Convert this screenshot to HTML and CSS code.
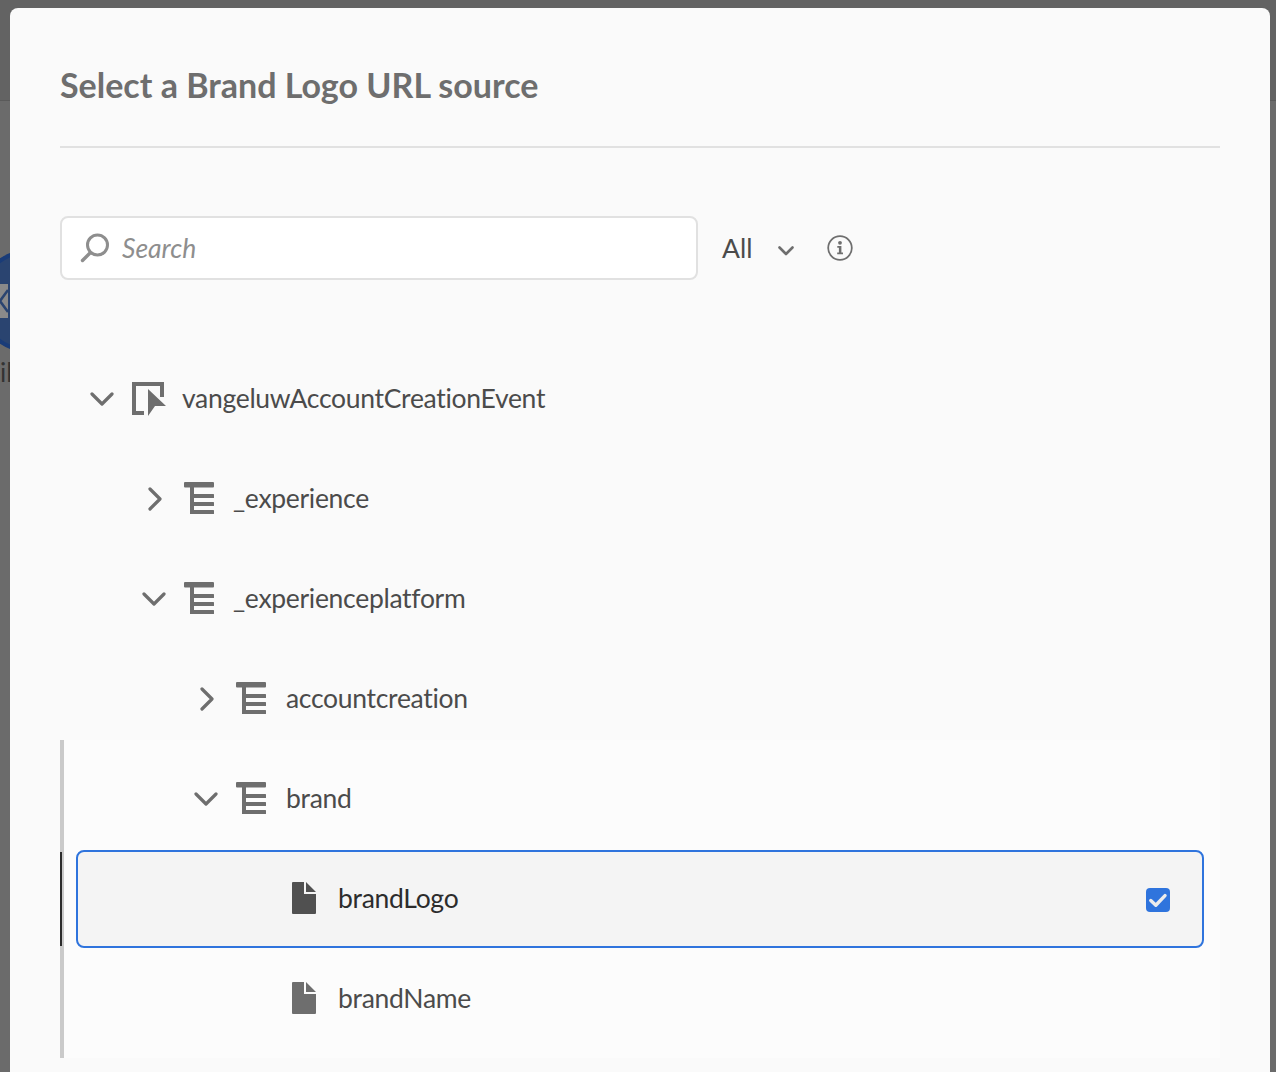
FILE: index.html
```html
<!DOCTYPE html>
<html lang="en">
<head>
    <meta charset="UTF-8">
    <meta name="viewport" content="width=device-width, initial-scale=1.0">
    <title>Select a Brand Logo URL source</title>
    <link rel="stylesheet" href="styles.css">
</head>
<body>
    <!-- page behind the dialog, only a sliver shows -->
    <div class="behind">
        <div class="behind-top"></div>
        <svg class="behind-circle" width="10" height="104" viewBox="0 0 10 104">
            <circle cx="28" cy="52" r="49" fill="#2a4470" stroke="#1a3c78" stroke-width="4"/>
            <rect x="0" y="35" width="8" height="34" fill="#8a8a8a"/>
            <path d="M8 41 L0 52 L8 63" fill="none" stroke="#2a4470" stroke-width="2.5"/>
        </svg>
        <div class="behind-label">il</div>
    </div>

    <div class="dialog">
        <h1 class="dialog-title">Select a Brand Logo URL source</h1>
        <div class="divider"></div>

        <div class="toolbar">
            <div class="search">
                <svg class="search-icon" width="30" height="30" viewBox="0 0 30 30">
                    <circle cx="17.5" cy="12" r="10" fill="none" stroke="#8e8e8e" stroke-width="3"/>
                    <path d="M10 20 L2.5 27.5" fill="none" stroke="#8e8e8e" stroke-width="3.4" stroke-linecap="round"/>
                </svg>
                <span class="search-text">Search</span>
            </div>
            <span class="filter-label">All</span>
            <svg class="filter-chevron" width="16" height="10" viewBox="0 0 16 10">
                <path d="M1.5 1.5 L8 8 L14.5 1.5" fill="none" stroke="#6e6e6e" stroke-width="2.6" stroke-linecap="round" stroke-linejoin="round"/>
            </svg>
            <svg class="info-icon" width="26" height="26" viewBox="0 0 26 26">
                <circle cx="13" cy="13" r="11.8" fill="none" stroke="#6e6e6e" stroke-width="1.8"/>
                <circle cx="13" cy="7.8" r="1.9" fill="#6e6e6e"/>
                <path d="M10.3 11 H14.4 V17.6 H16 V19.3 H10.2 V17.6 H11.9 V12.7 H10.3 Z" fill="#6e6e6e"/>
            </svg>
        </div>

        <div class="tree">
            <div class="row">
                <svg class="chevron down" width="24" height="14" viewBox="0 0 24 14">
                    <path d="M2 2 L12 12 L22 2" fill="none" stroke="#6e6e6e" stroke-width="3.2" stroke-linecap="round" stroke-linejoin="round"/>
                </svg>
                <svg class="icon-event" width="36" height="36" viewBox="0 0 36 36">
                    <path d="M12 32 H2 V3 H30 V16" fill="none" stroke="#6e6e6e" stroke-width="4"/>
                    <path d="M16 8 L34 25 L23 25 L16 35 Z" fill="#6e6e6e" stroke="#fafafa" stroke-width="2" paint-order="stroke"/>
                </svg>
                <span class="row-text">vangeluwAccountCreationEvent</span>
            </div>

            <div class="row level-1">
                <svg class="chevron right" width="14" height="24" viewBox="0 0 14 24">
                    <path d="M2 2 L12 12 L2 22" fill="none" stroke="#6e6e6e" stroke-width="3.2" stroke-linecap="round" stroke-linejoin="round"/>
                </svg>
                <svg class="icon-object" width="30" height="32" viewBox="0 0 30 32"><use href="#object"/></svg>
                <span class="row-text">_experience</span>
            </div>

            <div class="row level-1">
                <svg class="chevron down" width="24" height="14" viewBox="0 0 24 14">
                    <path d="M2 2 L12 12 L22 2" fill="none" stroke="#6e6e6e" stroke-width="3.2" stroke-linecap="round" stroke-linejoin="round"/>
                </svg>
                <svg class="icon-object" width="30" height="32" viewBox="0 0 30 32"><use href="#object"/></svg>
                <span class="row-text">_experienceplatform</span>
            </div>

            <div class="row level-2">
                <svg class="chevron right" width="14" height="24" viewBox="0 0 14 24">
                    <path d="M2 2 L12 12 L2 22" fill="none" stroke="#6e6e6e" stroke-width="3.2" stroke-linecap="round" stroke-linejoin="round"/>
                </svg>
                <svg class="icon-object" width="30" height="32" viewBox="0 0 30 32"><use href="#object"/></svg>
                <span class="row-text">accountcreation</span>
            </div>

            <div class="group">
                <div class="row level-2">
                    <svg class="chevron down" width="24" height="14" viewBox="0 0 24 14">
                        <path d="M2 2 L12 12 L22 2" fill="none" stroke="#6e6e6e" stroke-width="3.2" stroke-linecap="round" stroke-linejoin="round"/>
                    </svg>
                    <svg class="icon-object" width="30" height="32" viewBox="0 0 30 32"><use href="#object"/></svg>
                    <span class="row-text">brand</span>
                </div>

                <div class="row-selected">
                    <svg class="icon-file dark" width="26" height="32" viewBox="0 0 26 32"><use href="#file"/></svg>
                    <span class="row-text">brandLogo</span>
                    <span class="checkbox">
                        <svg width="24" height="24" viewBox="0 0 24 24">
                            <path d="M4.8 12.5 L9.8 17.2 L19 7.6" fill="none" stroke="#ececec" stroke-width="3.4" stroke-linecap="round" stroke-linejoin="round"/>
                        </svg>
                    </span>
                </div>

                <div class="row level-leaf">
                    <svg class="icon-file" width="26" height="32" viewBox="0 0 26 32"><use href="#file"/></svg>
                    <span class="row-text">brandName</span>
                </div>
            </div>
        </div>
    </div>

    <svg class="defs" width="0" height="0">
        <defs>
            <g id="object">
                <rect x="0" y="0" width="30" height="5.5" rx="1"/>
                <rect x="6" y="0" width="4" height="32"/>
                <rect x="6" y="12" width="24" height="4" rx="0.5"/>
                <rect x="6" y="20" width="24" height="4" rx="0.5"/>
                <rect x="6" y="28" width="24" height="4" rx="0.5"/>
            </g>
            <path id="file" d="M1 0 H12 V12 H24 V31 a1 1 0 0 1 -1 1 H1 a1 1 0 0 1 -1 -1 V1 a1 1 0 0 1 1 -1 Z M14 0 L24 10 H14 Z"/>
        </defs>
    </svg>
</body>
</html>
```

FILE: styles.css
```css
html, body {
    margin: 0;
    padding: 0;
}
body {
    font-family: Lato, "Open Sans", Arial, sans-serif;
    font-variant-ligatures: none;
    background-color: #6b6b6b;
    height: 1072px;
    overflow: hidden;
    position: relative;
}
.behind-top {
    position: absolute;
    left: 0;
    top: 0;
    width: 100%;
    height: 100px;
    background: #636363;
    border-bottom: 1px solid #5a5a5a;
}
.behind-circle {
    position: absolute;
    left: 0;
    top: 249px;
}
.behind-label {
    position: absolute;
    left: 0;
    top: 358px;
    font-size: 26px;
    line-height: 28px;
    color: #333;
}
.dialog {
    position: absolute;
    left: 10px;
    top: 8px;
    width: 1260px;
    height: 1064px;
    box-sizing: border-box;
    padding: 0 50px;
    background: #fafafa;
    border-radius: 8px 8px 0 0;
}
.dialog-title {
    margin: 0;
    padding-top: 55px;
    height: 83px;
    font-size: 34px;
    line-height: 44px;
    font-weight: 700;
    color: #6e6e6e;
}
.divider {
    height: 2px;
    background: #e1e1e1;
}
.toolbar {
    display: flex;
    align-items: center;
    margin-top: 68px;
    height: 64px;
}
.search {
    display: flex;
    align-items: center;
    width: 638px;
    height: 64px;
    box-sizing: border-box;
    padding-left: 18px;
    background: #fff;
    border: 2px solid #e1e1e1;
    border-radius: 8px;
}
.search-text {
    margin-left: 12px;
    font-size: 26.5px;
    font-style: italic;
    color: #8e8e8e;
}
.filter-label {
    margin-left: 24px;
    font-size: 26.5px;
    color: #4b4b4b;
}
.filter-chevron {
    margin-left: 26px;
    margin-top: 6px;
}
.info-icon {
    margin-left: 33px;
}
.tree {
    margin-top: 69px;
}
.row, .row-selected {
    display: flex;
    align-items: center;
    height: 100px;
}
.row {
    padding-left: 30px;
}
.row-text {
    font-size: 26.5px;
    letter-spacing: -0.3px;
    margin-bottom: 2px;
    color: #4b4b4b;
}
.chevron.down {
    margin-right: 18px;
}
.chevron.right {
    margin-left: 6px;
    margin-right: 22px;
}
.icon-event {
    margin-right: 14px;
}
.icon-object {
    margin-right: 19px;
    margin-bottom: 2px;
    fill: #6e6e6e;
}
.level-1 {
    padding-left: 82px;
}
.level-2 {
    padding-left: 134px;
}
.level-2 .icon-object {
    margin-right: 20px;
}
.group {
    margin-top: -9px;
    padding-top: 9px;
    height: 318px;
    background: #fcfcfc;
    border-left: 4px solid #cacaca;
    box-sizing: border-box;
    position: relative;
}
.group .level-2 {
    padding-left: 130px;
}
.row-selected {
    box-sizing: border-box;
    height: 98px;
    margin: 1px 16px 1px 12px;
    padding-left: 214px;
    padding-right: 32px;
    background: #f4f4f4;
    border: 2px solid #2f74dd;
    border-radius: 8px;
    position: relative;
}
/* black marker on the left rail */
.row-selected::before {
    content: "";
    position: absolute;
    left: -18px;
    top: 0;
    width: 2px;
    height: 94px;
    background: #2c2c2c;
}
.row-selected .row-text {
    color: #2c2c2c;
}
.level-leaf {
    padding-left: 228px;
}
.icon-file {
    margin-right: 20px;
    margin-bottom: 2px;
    fill: #6e6e6e;
}
.icon-file.dark {
    fill: #505050;
}
.checkbox {
    margin-left: auto;
    margin-top: 2px;
    width: 24px;
    height: 24px;
    border-radius: 4px;
    background: #2f74dd;
}
.checkbox svg {
    display: block;
}
.defs {
    position: absolute;
}
```
